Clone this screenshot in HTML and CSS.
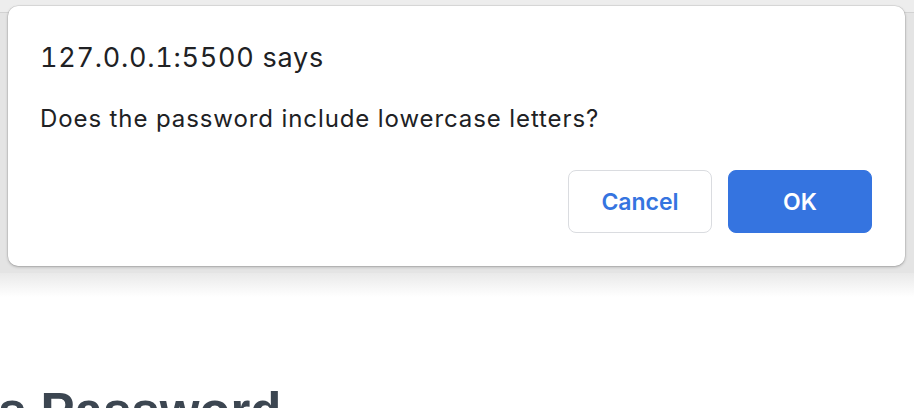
FILE: index.html
```html
<!DOCTYPE html>
<html>
<head>
<meta charset="utf-8">
<link rel="stylesheet" href="styles.css">
</head>
<body>
<div class="strip"></div>
<div class="shade"></div>
<div class="fade"></div>
<main class="page">
  <h1 class="heading">s Password</h1>
</main>
<div class="dialog">
  <div class="title">127.0.0.1:5500 says</div>
  <div class="message">Does the password include lowercase letters?</div>
  <div class="actions">
    <button class="btn btn-cancel">Cancel</button>
    <button class="btn btn-ok">OK</button>
  </div>
</div>
</body>
</html>
```
FILE: styles.css
```css
html, body {
  margin: 0;
  padding: 0;
  background: #ffffff;
  overflow: hidden;
  height: 408px;
}
.strip {
  height: 12px;
  background: #ededed;
  border-bottom: 1px solid #d2d2d2;
}
.shade {
  height: 260px;
  background: #e4e4e4;
}
.fade {
  height: 24px;
  background: linear-gradient(#e9e9e9, #ffffff);
}
.page {
  display: block;
}
.heading {
  margin: 89px 0 0 -2px;
  font-family: "Liberation Sans", Arial, sans-serif;
  font-weight: 700;
  font-size: 51px;
  line-height: 51px;
  color: #3c4651;
  white-space: nowrap;
}
.dialog {
  position: absolute;
  left: 8px;
  right: 9px;
  top: 6px;
  height: 260px;
  box-sizing: border-box;
  background: #ffffff;
  border-radius: 10px;
  box-shadow: 0 0 0 0.5px rgba(0,0,0,0.12), 0 1px 3px rgba(0,0,0,0.25);
  padding: 36px 33px 33px 32px;
  font-family: Inter, "Liberation Sans", sans-serif;
  color: #202124;
  display: flex;
  flex-direction: column;
}
.title {
  font-size: 27px;
  line-height: 32px;
  margin-bottom: 30px;
  font-variant-numeric: tabular-nums;
  letter-spacing: 0.75px;
}
.message {
  font-size: 24px;
  line-height: 30px;
  color: #202124;
  letter-spacing: 0.9px;
}
.actions {
  margin-top: auto;
  display: flex;
  justify-content: flex-end;
  gap: 16px;
}
.btn {
  width: 144px;
  height: 63px;
  border-radius: 8px;
  font-family: Inter, "Liberation Sans", sans-serif;
  font-size: 23px;
  font-weight: 600;
  cursor: pointer;
}
.btn-cancel {
  background: #ffffff;
  border: 1px solid #dadce0;
  color: #3574e0;
}
.btn-ok {
  background: #3574e0;
  border: 1px solid #3574e0;
  color: #ffffff;
}
```
